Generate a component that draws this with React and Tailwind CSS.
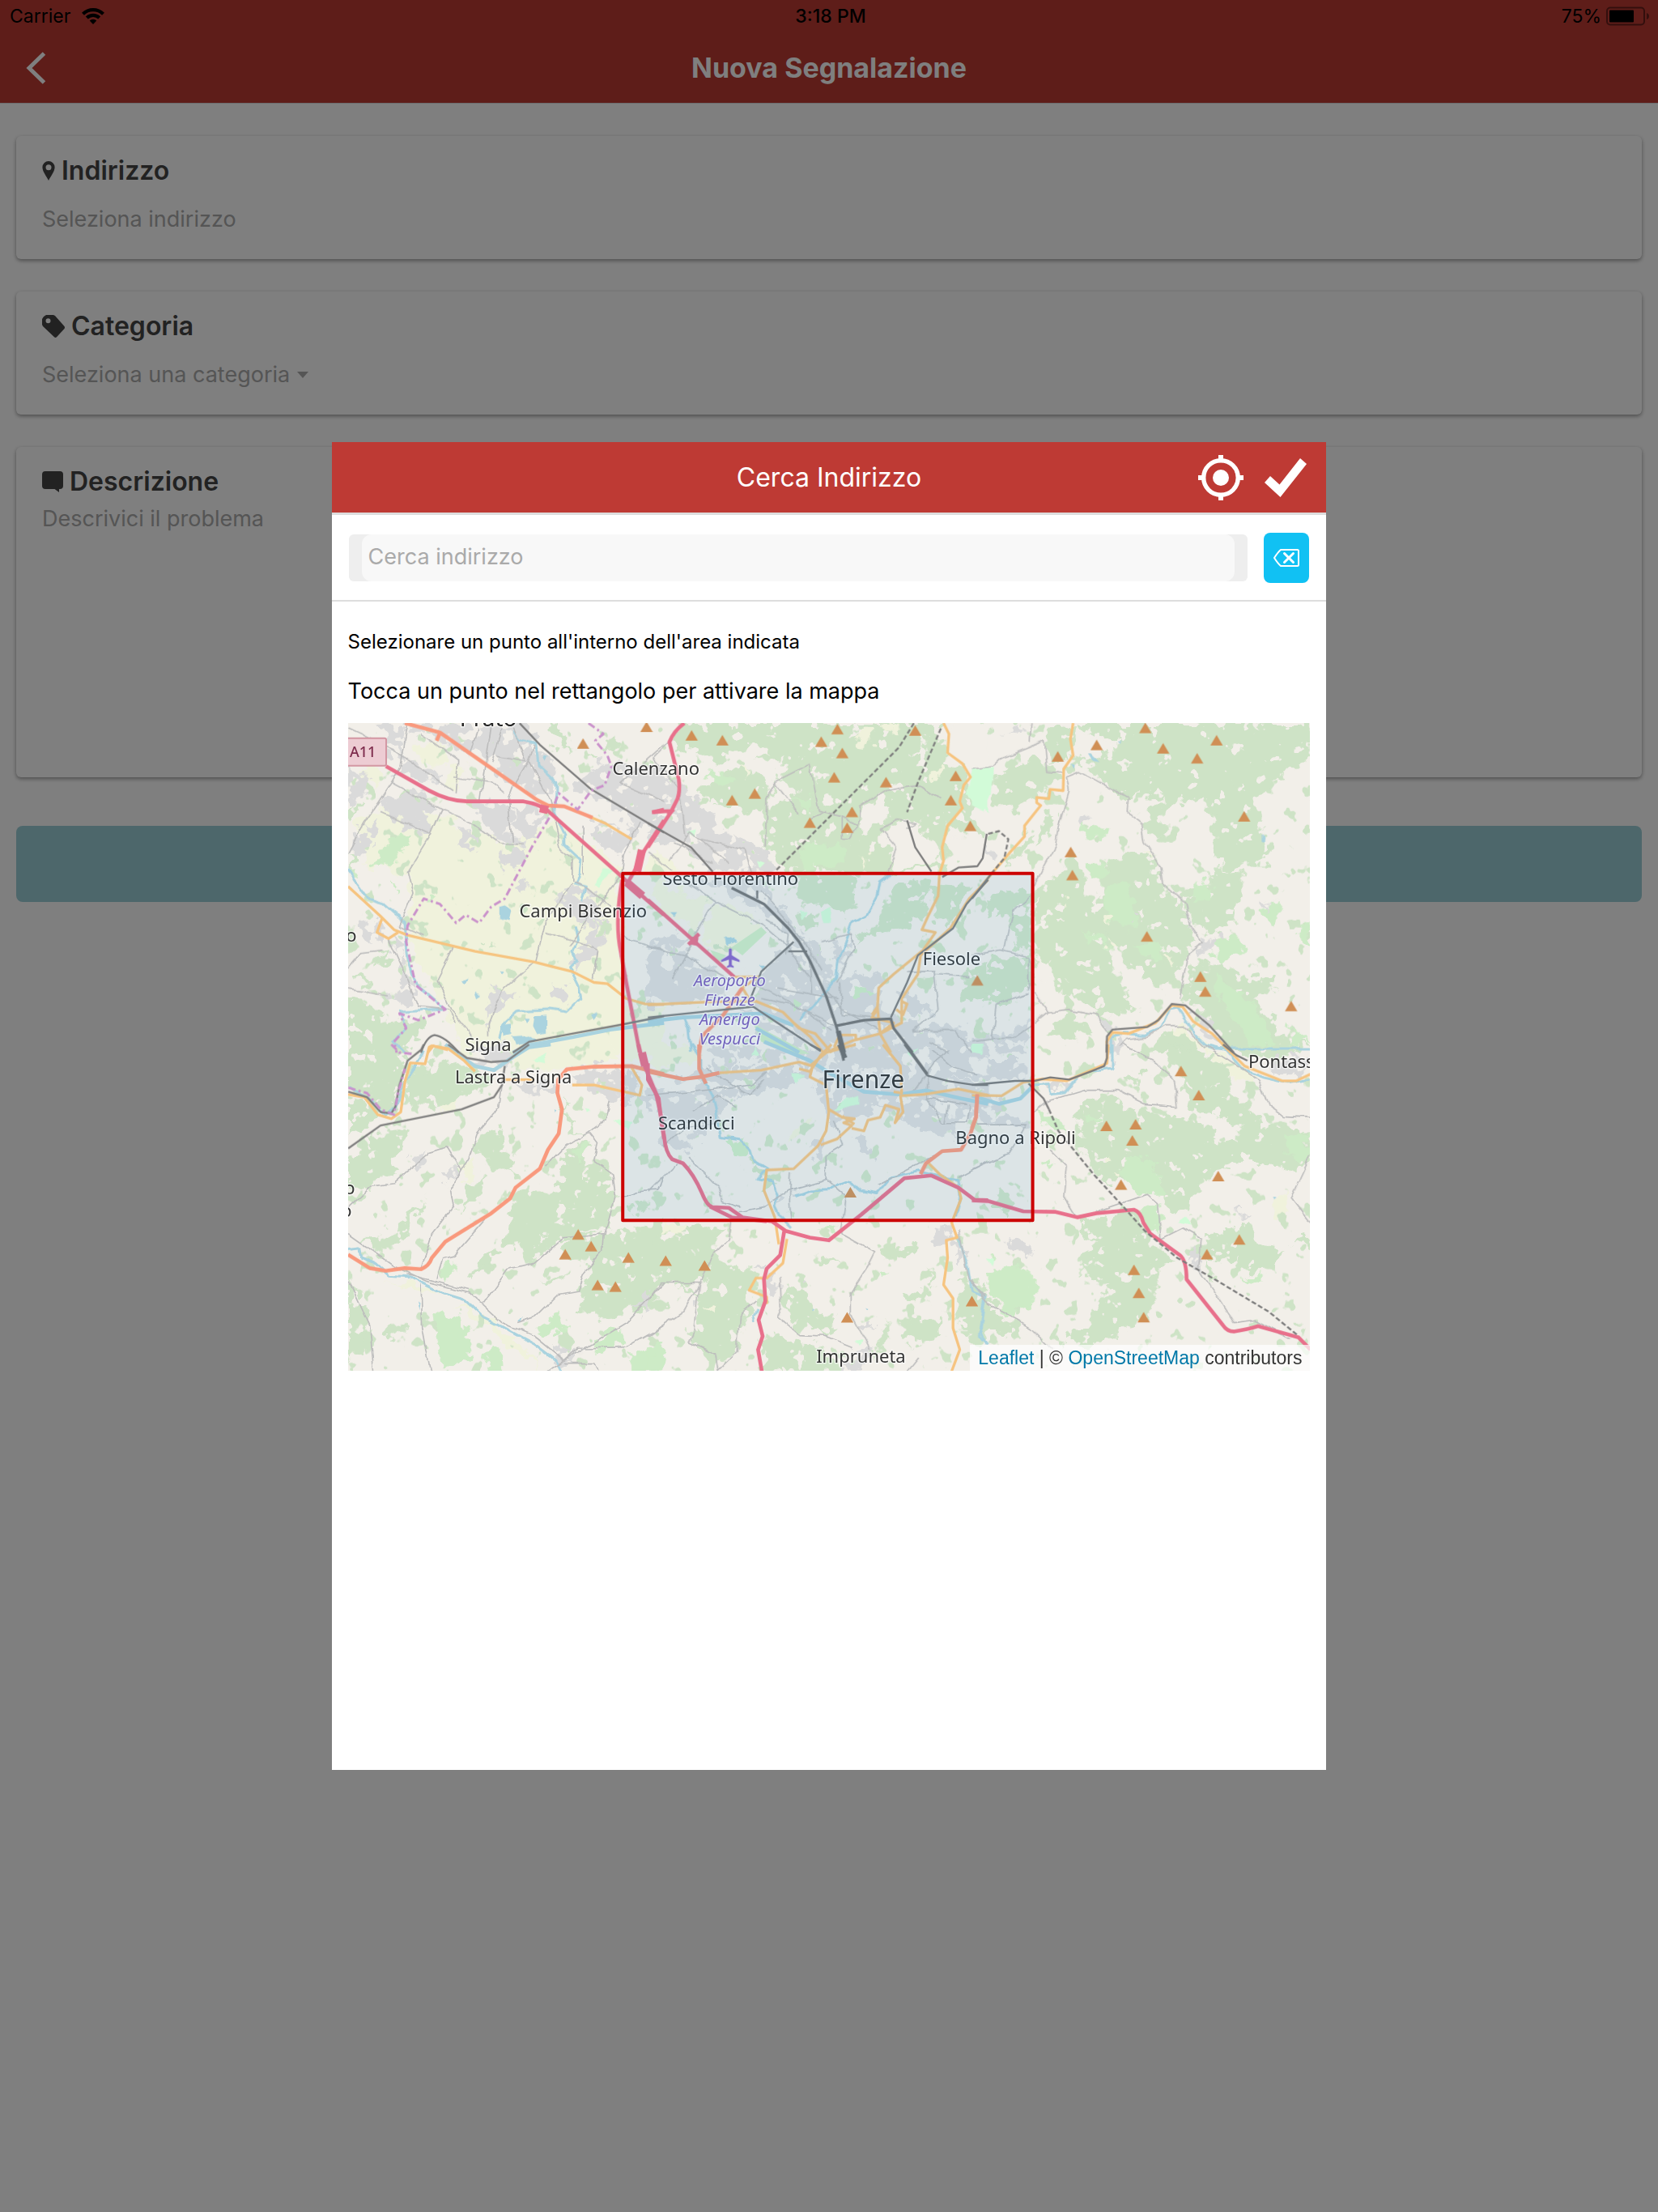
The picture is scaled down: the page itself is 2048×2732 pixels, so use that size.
import React from "react";

/* The map is drawn in six sheets; each sheet has its own origin and is drawn at a third of its size. */
const ORIGIN = {
  A: "translate(420 880) scale(0.33333)",
  B: "translate(800 880) scale(0.33333)",
  C: "translate(1200 880) scale(0.33333)",
  D: "translate(420 1290) scale(0.33333)",
  E: "translate(800 1290) scale(0.33333)",
  F: "translate(1200 1290) scale(0.33333)",
};

const FARM = {
  A: "M60 400L200 340 350 380 600 480 800 400 1030 560 1045 1100 1200 1080 1200 1260 460 1260 380 1060 260 900 260 600 90 560ZM290 110L380 110 400 180 340 210 290 180ZM70 220L140 190 150 280 80 250ZM400 190L460 200 440 260 400 300ZM600 230L640 180 660 210 620 260Z",
  B: "M0 510L60 530 120 590 0 590ZM10 650L240 680 180 810 90 750ZM210 760L420 790 300 900 210 860ZM0 610L60 620 90 690 40 700Z",
  C: "M450 830L520 850 560 880 500 870ZM720 1180L780 1160 900 1240 850 1250Z",
  D: "M620 40L1000 0 1040 60 840 90 660 100ZM420 960L520 980 720 1160 740 1200 560 1060ZM180 880L360 900 300 920ZM1045 0L1110 0 1120 60 1050 60ZM360 210L430 200 420 250 370 260ZM440 430L500 420 500 470 460 520Z",
  E: "M0 10L160 0 180 60 60 90 0 80ZM540 300L600 270 590 330 530 350Z",
  F: "M860 10L930 30 1050 110 1040 150 950 110ZM1130 560L1170 550 1160 630 1120 640Z",
};

const FOREST = {
  A: "M30 1050L120 1080 190 1150 300 1120 320 1180 240 1260 30 1260ZM750 40L820 45 830 100 860 130 830 140 790 90ZM30 530L60 570 40 590ZM30 970L110 990 120 1010 40 990ZM980 110L1030 90 1030 120 990 130ZM30 350L80 350 40 400ZM120 910L190 880 170 930ZM530 850L570 860 550 875ZM920 150L950 160 930 175Z",
  B: "M130 40L850 40 940 100 1100 150 1190 230 1180 320 1100 420 1090 590 500 590 440 500 430 320 500 230 520 170 390 180 430 120 330 130 260 180 120 130 90 90ZM200 290L330 190 430 240 440 350 380 370 350 350 220 340ZM1130 320L1200 330 1250 460 1150 440 1110 420ZM850 40L1080 40 1110 160 1000 160 900 90ZM560 600L790 600 780 690 720 740 650 720 560 700ZM760 850L870 760 930 640 1060 620 1000 770 900 810 800 830ZM1050 620L1200 640 1180 700 1120 800 1060 740ZM1180 960L1260 930 1260 1060 1180 1080 1160 1040ZM540 760L610 740 620 800 560 800Z",
  C: "M380 40L1254 40 1254 165 1045 320 1075 400 1060 480 1110 520 1100 560 1000 560 960 590 890 520 900 400 870 320 720 340 680 400 720 420 690 480 650 450 640 370 720 300 600 310 540 310 440 200 490 160 560 100 480 80 380 60ZM380 150L420 180 500 210 490 230 390 190ZM290 50L370 60 365 170 300 190 280 110ZM80 260L140 190 280 170 330 240 240 310 130 360 80 330ZM0 360L50 440 0 470ZM160 490L220 440 190 520 130 560ZM230 670L370 540 390 560 460 740 510 880 600 1110 520 1120 400 1080 310 1000 240 890ZM500 560L560 530 680 540 700 640 780 690 810 790 840 850 800 880 790 940 720 1020 640 980 560 920 540 880 480 800 460 740 480 640ZM780 670L880 620 910 580 1000 590 1000 660 960 780 880 820 820 780ZM800 960L930 930 1000 980 1110 970 1100 1040 1040 1060 1200 1260 960 1260 840 1100 780 1060ZM290 1170L370 1110 450 1180 340 1220ZM690 1260L660 1230 720 1180 800 1190 850 1260ZM80 680L220 650 220 880 160 860 140 760 60 740ZM80 900L210 910 200 1020 120 1080 40 1080 60 960ZM280 380L310 370 300 450 230 500Z",
  D: "M30 20L200 20 240 60 230 150 200 240 150 240 100 190 30 160ZM30 190L80 200 130 260 60 330 30 330ZM240 90L420 60 540 110 560 160 420 200 350 240 250 200ZM120 330L240 310 260 340 190 420 210 480 30 560 30 430ZM650 550L740 540 800 560 830 420 900 360 930 380 900 450 1000 480 1010 560 1000 680 900 700 800 740 720 800 610 730 620 640ZM850 720L980 700 1200 660 1200 900 1100 980 1000 1020 880 980 900 900 930 820 820 770ZM30 870L80 920 110 1040 90 1130 30 1170ZM160 1040L260 1030 220 1080 170 1080ZM440 630L470 520 540 480 510 560ZM480 360L580 310 620 400 660 480 600 460 540 420ZM80 720L200 690 320 570 270 650 220 740 130 780ZM490 860L550 740 600 750 540 830ZM830 200L860 280 890 340 850 320ZM740 870L850 840 800 880ZM1060 590L1150 580 1080 630Z",
  E: "M60 680L160 665 290 680 260 720 240 760 320 830 400 840 420 870 380 930 390 1000 330 1060 340 1130 270 1180 210 1140 150 1100 180 950 100 870 0 920 0 760ZM500 890L560 900 620 970 720 1060 640 1050 520 1020ZM430 1090L500 1080 640 1120 740 1210 430 1210ZM880 770L990 730 980 790 900 800ZM960 1020L1080 1010 1090 1080 1000 1120 930 1080ZM650 790L720 820 640 810ZM1150 880L1250 880 1250 1100 1150 1060ZM940 920L1040 900 1050 820 1060 930 960 960ZM350 430L410 470 440 540 480 530 400 420ZM860 1100L900 1020 880 1110 830 1180Z",
  F: "M720 20L880 30 980 150 960 180 1020 240 1080 300 1120 280 1250 320 1250 440 1170 480 1120 450 1020 430 950 450 840 500 830 570 770 640 720 610 700 500 580 500 500 520 390 380 400 220 520 190 580 250 770 270 860 310 970 360 1000 300 860 250 800 230 790 160ZM560 120L640 100 620 160ZM400 660L560 620 640 690 760 820 690 830 660 1010 560 1060 480 1110 330 1110 360 1070 430 1050 470 970 520 900 400 850 400 780 450 730ZM880 700L1030 660 1030 720 1160 770 1060 840 960 820 990 780 870 780ZM100 540L150 570 130 620 90 600ZM1190 730L1254 710 1254 760ZM860 790L910 870 880 880ZM960 0L1250 0 1120 60 1020 40ZM0 960L50 940 130 1010 190 1080 60 1060 40 1110 0 1110Z",
};

const MEADOW = {
  A: "M120 550L200 460 270 450 200 570 150 580ZM190 630L215 650 200 665ZM330 670L355 680 340 695ZM40 560L75 600 60 620Z",
  B: "M200 230L280 220 330 270 250 260ZM560 500L720 480 740 560 580 580ZM530 330L610 310 590 380ZM760 1010L840 1040 830 1090 760 1090ZM540 1060L570 1080 540 1110Z",
  C: "M430 560L520 560 480 640 440 620ZM480 660L560 640 620 740 600 800 500 780ZM600 860L720 860 700 930 640 900ZM820 620L900 640 880 700 820 700ZM900 980L1040 1080 1120 1220 1060 1250 900 1040ZM400 410L500 440 490 490 420 460ZM420 800L500 860 520 880 440 840ZM1050 730L1140 700 1120 790 1060 750ZM1210 800L1254 790 1254 880 1220 850ZM1180 1160L1250 1220 1180 1240ZM900 850L990 830 1020 870 930 930 890 900Z",
  D: "M370 830L410 790 440 840 390 880ZM350 990L450 1010 480 1090 490 1160 380 1200 370 1110ZM530 1210L560 1110 600 1130 610 1210ZM730 1070L800 1000 830 1060 760 1080ZM930 1090L1040 1060 1060 1110 950 1130ZM1060 1160L1200 1100 1200 1210 1080 1210ZM880 390L920 350 920 400 880 440Z",
  E: "M300 360L360 350 380 410 320 400ZM850 850L890 840 880 870ZM640 690L690 670 700 700ZM700 230L780 190 780 230 700 250ZM0 1130L30 1170 40 1210 0 1210Z",
  F: "M580 400L680 440 720 560 620 560 540 480ZM620 620L690 600 700 700 650 680ZM1000 870L1070 850 1060 890ZM60 850L150 810 240 870 230 960 130 1000 60 930ZM230 250L320 280 360 330 280 300ZM430 250L480 280 420 290ZM1160 340L1250 330 1230 420 1180 430ZM60 790L80 800 70 820ZM250 440L290 435 270 460Z",
};

const URBAN = {
  A: "M150 50L240 45 230 180 160 160 150 90ZM250 45L700 45 720 120 800 200 790 300 700 300 640 280 560 190 500 150 420 130 340 90 260 80ZM30 200L120 240 100 300 30 340ZM190 230L260 170 370 230 330 260 250 230ZM160 340L240 290 320 320 370 360 330 400 300 460 160 370ZM500 340L630 340 640 480 600 480 500 400ZM640 340L720 350 770 390 740 440 690 500 640 480ZM50 440L130 400 130 470 90 540 50 530ZM650 650L680 610 710 630 670 670ZM440 430L530 460 480 540ZM590 520L680 500 660 560 610 590ZM820 660L900 640 980 700 980 780 900 800 860 740 820 720ZM860 270L980 190 1120 200 1200 200 1200 480 1100 420 1000 350 900 300ZM940 400L1110 420 1090 500 1040 530 930 480ZM780 1010L840 1010 860 1060 800 1090ZM560 1010L650 1050 580 1120 540 1180ZM190 820L240 860 230 940 280 1020 250 1100 180 1060 230 1000ZM70 770L140 760 140 850 80 810ZM880 880L960 780 1000 830 940 900 860 960ZM1150 890L1200 850 1200 960 1160 940Z",
  B: "M0 220L120 260 140 310 210 310 200 360 340 470 450 520 460 590 240 590 120 480 0 470ZM130 610L420 620 560 800 640 880 700 1000 850 960 860 1120 960 1140 1180 1170 1180 1260 650 1260 400 1090 420 960 540 860 430 750 240 640ZM0 880L150 890 260 960 300 1060 0 1090ZM20 820L140 820 120 870 0 860ZM680 850L760 860 740 930 690 920ZM940 1040L1020 1060 1060 1110 960 1120ZM340 1090L420 1130 640 1250 400 1180Z",
  C: "M830 850L900 830 910 850 850 900ZM390 380L430 400 400 430ZM470 1120L530 1180 500 1190ZM510 1210L560 1200 545 1260 510 1260ZM800 1110L860 1120 940 1230 900 1230ZM50 490L80 520 60 590ZM120 70L190 60 180 90ZM0 1210L120 1200 220 1140 200 1260 0 1260ZM1070 700L1100 710 1080 750ZM600 740L625 755 610 765ZM790 720L810 750 800 800Z",
  D: "M480 20L620 0 620 90 500 70ZM620 130L820 140 810 190 680 180ZM880 80L1040 90 1040 210 960 200 860 130ZM370 480L430 450 440 480 390 520ZM260 430L330 390 290 460 240 480ZM790 1130L880 1120 860 1200 800 1180ZM1080 960L1150 920 1140 990ZM1045 100L1100 90 1110 180 1060 240 1045 230ZM1110 170L1200 180 1200 240 1130 230Z",
  E: "M0 180L200 90 560 90 600 20 900 0 1050 100 1260 150 1260 300 1180 260 1130 350 980 300 850 220 760 280 690 300 600 120 440 170 340 210 290 200 260 300 180 360 120 400 60 380 40 230ZM220 0L600 20 560 60 240 90ZM1040 0L1260 0 1260 130 1050 110ZM440 560L560 530 520 580ZM600 380L660 350 640 450ZM760 360L800 340 850 430 830 430ZM430 860L490 870 490 920 450 920ZM1050 690L1110 670 1120 740 1050 740ZM1120 720L1180 760 1160 810ZM780 1040L850 1040 800 1070ZM770 1120L820 1130 800 1210 710 1210 760 1170ZM390 820L440 815 410 840ZM560 880L590 890 570 910ZM160 950L190 940 180 990Z",
  F: "M120 720L230 750 210 790ZM280 130L360 140 340 180 290 160ZM0 20L60 60 200 60 200 130 0 130ZM20 210L100 200 210 300 120 310 20 300ZM820 740L840 760 850 860 810 820ZM1100 70L1200 30 1250 60 1220 110 1120 100ZM520 0L550 0 530 90ZM650 50L700 90 740 130 690 90ZM1000 610L1030 610 980 640Z",
};

const CLEARING = {
  B: "M340 130L430 120 450 160 370 180ZM500 240L550 290 540 315 490 320 450 370 440 330ZM790 350L830 340 880 300 890 380 830 430 780 460ZM860 430L940 390 1000 410 1050 480 1090 560 900 580 920 500 860 470ZM1110 480L1200 440 1260 480 1260 560 1130 550ZM970 160L1010 120 1010 150ZM1110 40L1260 40 1260 190 1200 220 1120 150Z",
  C: "M380 80L450 90 520 120 480 170 430 150 380 120ZM320 765L345 770 335 785ZM420 960L450 965 435 975ZM240 910L290 920 300 980 250 990ZM1030 42L1090 42 1050 60Z",
  D: "M920 610L950 620 930 640ZM740 710L775 710 750 730ZM720 770L745 770 740 790ZM900 460L920 475 910 490ZM1060 860L1085 850 1080 880Z",
  E: "M140 900L230 860 230 900 180 930ZM60 930L110 900 140 930 60 1000Z",
  F: "M460 410L510 400 520 440 480 450ZM590 720L615 725 605 735Z",
};

const GLADES = {
  B: "M780 60L830 60 830 125 775 120ZM870 42L920 50 910 85ZM1040 260L1085 180 1110 200 1060 260ZM345 190L385 220 370 240ZM790 540L810 545 800 575Z",
  C: "M340 680L365 690 350 710ZM640 520L660 525 650 535ZM485 740L520 750 500 790ZM720 900L740 905 730 930Z",
  E: "M70 660L140 665 130 700 60 700ZM210 960L260 970 230 1000Z",
  F: "M490 420L530 415 520 450 490 450ZM510 490L540 485 530 510Z",
};

/* Open ground among the built-up areas inside the selectable rectangle. */
const OPEN_GROUND = {
  B: "M20 660L230 685 190 770 130 790 60 730ZM250 715L300 705 425 790 330 890 240 850 215 790Z",
};

const AIRFIELD = {
  B: "M310 870L420 795 440 815 350 900ZM230 880L290 900 260 930ZM390 1150L440 1180 600 1265 540 1265 420 1220ZM540 1060L570 1080 540 1110Z",
};

const SUBURB_GAPS = {
  B: "M250 700L320 720 300 760 240 740ZM480 700L560 780 600 860 560 830ZM300 940L380 960 360 1000 300 980ZM620 980L650 1000 640 1030ZM900 1180L960 1200 930 1240ZM1040 1180L1080 1200 1060 1230Z",
  E: "M300 20L420 60 340 80ZM60 140L200 130 180 180 70 170ZM1190 40L1260 60 1260 110 1200 100ZM1060 200L1160 240 1130 270 1060 250ZM300 150L360 140 330 180ZM110 290L200 300 150 350Z",
};

const LEISURE = {
  A: "M940 640L980 580 1010 585 960 650Z",
  B: "M1180 300L1200 220 1260 200 1260 370 1210 340ZM640 740L680 720 670 780 650 780ZM150 440L180 430 180 460ZM410 550L440 560 420 580ZM560 740L590 740 570 770Z",
  C: "M0 210L80 205 70 300 40 370 0 350Z",
  D: "M1010 280L1080 290 1070 320ZM720 60L760 30 765 70ZM905 235L930 240 915 250Z",
  E: "M690 245L720 210 780 190 780 225ZM530 110L580 110 550 145ZM380 30L400 10 410 40ZM960 30L1000 10 980 40ZM765 1095L795 1095 790 1120Z",
  F: "M0 0L40 0 40 40 0 30ZM760 660L790 640 810 670ZM55 795L80 800 70 820Z",
};

const PONDS = {
  A: "M590 720L610 715 635 730 625 775 590 765ZM720 1125L765 1120 765 1190 730 1195 715 1165ZM600 1155L640 1150 640 1190 605 1200ZM640 1200L700 1195 730 1215 650 1230ZM750 165L770 160 760 185ZM500 1030L525 1050 510 1060ZM450 990L470 980 460 1005ZM930 1120L955 1110 940 1140ZM590 960L610 960 600 970ZM680 1135L700 1135 690 1155Z",
  B: "M285 825L330 850 290 865ZM80 740L105 740 95 755ZM415 935L435 935 425 950Z",
  C: "M1073 455L1088 460 1085 482 1073 480ZM430 155L440 155 470 185 445 180ZM365 190L378 195 375 212ZM540 110L555 112 548 120Z",
  D: "M800 240L808 245 802 255ZM285 945L295 955 292 985ZM660 1020L680 1010 670 1030Z",
  E: "M610 975L620 978 612 988ZM810 970L820 975 815 980Z",
  F: "M1115 562L1128 564 1120 574Z",
};

const RIVERS = {
  A: "M640 70L660 100 725 115 735 200 800 260 800 300 790 370 830 450 830 490 890 545 885 600 870 630 910 640 895 700M30 580L70 640 110 695 160 710 240 780 250 900 285 1010 390 1100 220 1110 245 1160 200 1220 240 1260M870 790L880 840 860 880 880 920 850 950 880 1010 890 1060 840 1110 780 1100 660 1105 600 1160 590 1210",
  B: "M900 600L860 630 850 680 810 750 755 780 730 850 710 910 700 980 660 1030 620 1080 560 1140M130 1130L150 1170 160 1260",
  C: "M1260 1245L880 1245 830 1200 790 1140 760 1095 730 1100 700 1170 640 1195 560 1190 515 1200 515 1260",
  D: "M310 20L280 70 240 130 210 230 170 260 110 200 30 160M30 760L75 755 80 790 130 810 180 855 260 860 320 890 380 920 460 945 530 1010 600 1045 720 1110 800 1170 820 1210",
  E: "M160 0L200 60 200 120 240 190 255 260 270 340 340 350 380 390 390 430 440 460 410 500 460 510 480 560 470 600 490 640 530 680M545 560L600 540 680 535 710 520 750 505 790 540 850 550 900 490 950 480 1000 470 1080 490 1150 500 1160 560 1140 640M1150 720L1180 800 1200 910 1250 930 1230 1050 1255 1110M410 980L390 1030",
  F: "M230 150L280 145 290 185 340 180 390 120 450 100 520 90 520 0M860 0L940 20 1000 90 1080 120 1170 140 1254 125M0 880L45 930 30 1080 60 1110",
};

const ARNO = {
  A: "M640 1260L700 1232 860 1203 1000 1175 1200 1150",
  B: "M0 1145L130 1130 430 1115 540 1160M400 1170L560 1260",
  D: "M390 0L440 40 500 80 570 95 620 60 700 10 780 0",
  E: "M430 -10L600 60 680 110 800 175 930 185 1030 170 1160 200 1260 220",
  F: "M0 190L100 220 180 200 230 150",
};

const LANES = {
  A: "M250 50L225 200 190 260 90 410 30 520M190 260L375 360 490 410 590 485 680 490M640 280L625 320 640 480M375 360L330 460 250 590 270 670 220 790 310 830M700 180L640 280M720 120L700 180 780 330 820 510 860 540 860 620 900 640 1000 720M420 870L360 990 410 1100 490 1200M860 630L760 780 725 920 600 1030 550 1150 550 1200M30 60L180 130 420 290M760 815L880 850 955 885 940 990M1045 820L1080 850 1200 880M30 950L80 890 160 880M180 840L240 970 290 1090 400 1100 430 1150M150 370L330 450M560 50L520 330M600 60L560 190M1200 120L1040 260 1200 330M1110 400L1050 530 1040 600M300 80L440 180 430 300M510 60L480 160M420 240L560 260 610 300M640 60L690 180 580 160M900 420L900 600M30 1025L180 1050M850 860L1045 600",
  B: "M435 500L440 320 470 260 600 195 630 370 720 390M90 100L20 170 120 290 140 460M200 470L360 510 385 590M860 430L930 400 1000 410 960 430M860 430L920 500 890 590M0 870L130 900 300 990M250 700L180 820 90 990M130 620L250 700 430 790 500 850 600 980M660 1030L720 1100 860 1180M700 1000L760 880 750 820 640 850M960 960L1060 960 1075 1100 980 1180M720 470L720 390 780 420 790 350 880 290 940 280 1010 270 1080 320M720 470L750 470 780 420M1190 980L1060 970M480 1020L700 1060M400 1010L690 1160M1200 1260L1140 1180 980 1180M80 550L160 440 300 560M470 260L560 380M420 660L560 820 640 960M600 400L660 370M440 770L520 820 510 900M100 480L240 560M0 520L90 590M420 1060L560 1090 680 1180M600 900L610 1040M710 1000L720 1120 840 1130M1040 1220L1120 1260",
  C: "M0 210L80 200 110 170 270 105 280 220 340 225M220 40L215 110M350 240L400 220 580 320 575 370 630 415 640 480 700 570 710 640 790 710 810 790 850 850 800 890 770 1060M350 240L360 290 320 430 310 490 260 580 230 640M230 1040L280 1110 360 1100 460 1120 510 1190M0 900L110 880 210 910 210 1030M120 880L150 740 220 680M210 1040L90 1080 75 1210 0 1220M230 1150L280 1110M550 1240L570 1210 650 1200 720 1160 780 1160 860 1240M75 1210L150 1210 220 1160",
  D: "M30 610L120 525 200 515 330 400 395 380 450 470M600 150L590 230 510 330 480 420 410 540 420 600 340 700 300 830M550 630L420 780 380 790 360 870M30 700L200 820 330 880 480 920 600 1030 720 1080 830 1170 770 1210M250 850L480 910M300 890L305 1050 335 1210M30 870L110 1040 125 1210M530 960L620 835 720 810 830 715 980 700 1020 560 1010 480 940 430 955 370 920 325 820 390 760 450M1000 210L980 280 920 325M975 700L970 770 900 850 880 915 800 930 720 1010 660 1030M830 1170L1060 1030 1200 880M830 1170L880 1125 1060 1120 1200 1040M830 1180L940 1180 960 1210M1045 570L1090 545 1180 540 1200 490",
  E: "M0 1080L130 990 200 870 215 830 250 770 300 720 310 660M0 950L50 880 190 880 170 1060 150 1100 250 1145 260 1210 330 1140 340 1000 400 950M0 190L120 180 390 150 440 100M490 860L495 970 480 1010 560 1075 660 1080 760 1120M735 560L715 700 840 770 815 820 750 920 750 1000 800 1090 820 1130M530 470L525 580 530 650M725 370L660 410 660 500 520 540 430 600 340 620M150 420L260 530 280 580 340 600M1150 690L1190 870 1250 930M0 550L60 490 110 440M1035 110L1030 200 1090 290 1180 290 1190 220M1030 200L1180 220M1110 220L1100 290M1260 430L1150 490M850 520L1060 410M690 280L725 370M980 180L1060 70 1120 20M170 250L260 190 330 230M220 90L380 190 430 130M60 380L140 310 260 290M660 500L730 560M1050 20L1120 80 1220 110M960 1210L1000 1160",
  F: "M0 460L140 400 200 300 20 300M230 250L280 210 410 170 540 170 640 220 760 230 750 130 670 60 560 0M390 640L340 560 350 450 290 390M460 620L650 555 690 590 700 720 780 680 850 720 840 830 900 920 970 1030 1050 1020 1180 1090M0 870L60 960 220 1050 300 1130M1254 410L1180 570 1250 660M860 0L1060 130 1100 230 1150 265 1250 270",
};

const BORDERS = {
  A: "M920 40L975 80 945 105 990 160 1005 200 980 270 930 290 880 360 810 300 790 350M775 390L710 500 610 690 560 720 515 780 465 750 430 780 370 710 310 690 250 790 245 850 280 1010 390 1100 290 1140 220 1115 245 1170 200 1220 210 1260",
  D: "M190 0L220 30 265 35M30 160L100 180 150 240 200 260 215 180 240 90",
};

const PRIMARY = {
  A: "M920 385L980 410 1080 470M30 645L150 755 200 805 250 825 500 885 720 925 860 960 940 1000 990 1005 1060 1060 1130 1080 1200 1082M155 765L137 815 180 838 215 815M325 1260L345 1235 400 1250",
  B: "M1095 40L1115 80 1110 150 1165 190 1195 240 1170 270 1155 330 1165 355 1110 420 1090 500 1095 550 1080 600 1075 680 1040 750 1015 805 1065 815 1020 880 910 970 855 1020 850 1100 830 1130 910 1150 860 1190 760 1215 680 1250M1260 620L1190 690 1120 800 1010 900 1000 970 940 1060 940 1150 860 1190 900 1260M0 1083L230 1072 400 1070 500 1110 560 1170 620 1190 680 1260M540 1150L600 1200 650 1260M320 980L410 980 350 1020 380 1070M690 1240L710 1195 770 1195 770 1215M830 1120L850 1090 860 1190M940 1070L960 1080 945 1120 920 1100",
  C: "M375 40L365 100 375 160 340 210 338 290 290 285 285 320 240 315 240 335 255 345 195 420 195 460 140 520 80 590 0 685M960 1260L890 1190 820 1145 780 1090 740 1085 680 1150 580 1190 520 1185 500 1220 505 1260",
  D: "M30 185L90 195 140 260 190 275 225 250 240 140 260 68 315 72 330 10 340 5 400 15 460 60 500 100M600 130L720 130M860 150L940 150 1110 188 1118 150 1080 85",
  E: "M265 105L420 95 560 65 610 80 600 120 660 150 670 250 660 320 630 375 540 460 440 465 430 540 470 640 485 740M560 90L600 100 640 40 680 0M600 80L660 30 770 0M670 240L720 270 765 275 725 290 755 300 700 350 640 372M720 265L765 295M755 310L800 320 815 280 860 270 880 225 930 240 915 290 945 250 935 190 1020 185 1150 165 1260 188M870 0L935 80 940 180 910 175M1040 440L1080 480 1150 530 1160 570 1125 660 1145 715 1105 725 1110 790 1095 890 1130 940 1130 1050 1155 1130 1125 1210M515 720L500 810 440 865 400 865 375 910 440 935 440 960",
  F: "M0 188L110 190 190 140 260 128 350 135 500 70 505 0M930 0L1010 80 1150 135 1200 135 1254 110",
};

const TRUNK = {
  A: "M240 40L370 75 730 325 770 345 830 348 935 390M370 75L358 105",
  B: "M350 1020L280 1120 200 1200 190 1260",
  D: "M30 778L110 828 170 838 240 828 300 832Q330 820 340 790L390 730 560 625 630 570 650 530 740 460 770 390 810 330 822 240 805 180 808 130 840 92 940 82 1080 80 1200 110",
  E: "M0 100L130 128 200 120 265 105M190 0L190 90 215 145M1220 185L1215 270 1195 330 1160 390 1090 395 1030 440 1010 480",
  F: "M20 185L15 270 0 310",
};

const MOTORWAY = {
  A: "M170 200L330 290Q400 328 470 330L680 330Q740 340 770 365L1045 610 1130 690 1200 750M1200 400L1115 530 1095 580 1060 640M1045 620Q1020 760 1035 860L1060 1000 1110 1260M1160 370L1200 360",
  B: "M135 40Q95 70 80 110L115 250Q120 290 110 320L85 370 0 500M15 370L85 365M0 695L320 980M150 860L190 820",
  D: "M1105 0L1120 60 1170 180 1190 270 1200 350",
  E: "M0 70L0 130 40 200 50 290 60 340Q65 400 90 425L130 440Q170 480 200 550 220 600 240 602L300 605 350 640 460 655 510 690 600 715 670 725 790 630 950 495 1050 485 1150 530 1210 575 1260 577M230 600L310 640 440 655M505 690L490 780 440 830 430 870 435 950 410 1020 425 1080 408 1130 422 1210",
  F: "M0 577L60 580 190 618 310 620 390 640 460 625 600 612Q625 620 635 660L660 700 770 780Q795 800 795 870L930 1040Q945 1063 970 1063 1020 1055 1060 1043L1210 1085 1254 1130",
};

const JUNCTIONS = {
  A: "M740 355L770 362M1118 510L1100 590M1062 630L1120 680",
  B: "M80 365L90 375M160 845L185 850",
  D: "M1118 30L1130 80",
};

const RAIL = {
  A: "M665 40L740 120 930 285 1200 445M300 1260Q320 1200 350 1195 390 1200 440 1260M640 1260L700 1220 860 1190 1050 1155 1200 1125",
  B: "M0 410L160 500 240 590M540 850L420 960 380 1060M520 885L590 885M0 1130L390 1090 480 1150 640 1255M900 1130L960 1000 1000 900 1130 800 1180 710 1260 620M960 400L990 500 1050 590M1255 450L1240 540 1220 570 1150 575 1090 610M405 660L405 690",
  C: "M0 690L70 600M970 1260L880 1160 790 1085 740 1080 690 1140 650 1165 520 1175 500 1200 498 1260",
  D: "M30 175L100 195 150 250 190 255 205 230 220 150 250 60 300 20 310 0M400 0L470 50 560 65 620 60 700 0M30 385L150 300 450 240 570 195 600 150 610 80",
  E: "M950 0L1035 115 1110 135 1210 150 1260 150M600 0L640 20",
  F: "M0 150L160 135 230 135 290 122 360 130 440 100 490 80 500 50 500 0M210 145L265 200 285 240M930 0L980 40 1020 60",
};

const MAIN_RAIL = {
  B: "M310 650L430 710 520 800 560 850 600 920 660 1050 700 1170 725 1290M700 1160L800 1140 900 1135 910 1170 980 1260",
  E: "M955 0L1035 110",
};

const STATION = {
  B: "M705 1180L725 1260",
  E: "M710 0L730 50",
};

const TUNNELS = {
  B: "M985 40L930 130 470 590M1085 60L1000 260 960 370",
  C: "M60 450L100 440 135 470 120 540 70 600",
  F: "M285 240L320 320 450 480 560 600 640 690 760 790 900 870 1100 990 1210 1080",
};

const PEAKS = {
  A: [[900, 115], [1135, 53]],
  B: [[162, 85], [276, 103], [702, 62], [642, 108], [720, 150], [990, 67], [690, 240], [882, 258], [1140, 235], [1122, 325], [312, 325], [396, 300], [756, 368], [600, 408], [738, 427], [1194, 420], [1220, 992]],
  C: [[642, 57], [462, 120], [318, 163], [708, 133], [906, 103], [834, 170], [1008, 385], [366, 517], [372, 602], [648, 829], [846, 978], [864, 1033], [1182, 1087]],
  D: [[882, 703], [930, 746], [834, 776], [1068, 788], [954, 890], [1020, 896]],
  E: [[66, 800], [210, 818], [750, 547], [738, 1010], [1200, 950]],
  F: [[774, 98], [840, 187], [498, 301], [606, 295], [594, 355], [552, 518], [912, 487], [990, 721], [870, 776], [600, 834], [618, 919], [636, 1009]],
};

const TOWNS = [
  ["Calenzano", 810, 957], ["Campi Bisenzio", 720, 1133], ["Sesto Fiorentino", 902, 1093],
  ["Signa", 603, 1298], ["Lastra a Signa", 634, 1338], ["Scandicci", 860, 1395],
  ["Bagno a Ripoli", 1254, 1413], ["Fiesole", 1175, 1192], ["Impruneta", 1063, 1683],
  ["Pontass", 1582, 1319], ["o", 434, 1163], ["o", 432, 1475], ["o", 428, 1503],
];

const AIRPORT = [["Aeroporto", 1218], ["Firenze", 1242], ["Amerigo", 1266], ["Vespucci", 1290]];

const AREA = { filterUnits: "userSpaceOnUse", x: "400", y: "860", width: "1250", height: "860" };

function Layer({ data, ...props }) {
  return (
    <g {...props}>
      {Object.entries(data).map(([sheet, d]) => (
        <path key={sheet} d={d} transform={ORIGIN[sheet]} />
      ))}
    </g>
  );
}

function Lines({ data, color, width, dash }) {
  return (
    <Layer data={data} fill="none" stroke={color} strokeWidth={width} strokeLinejoin="round" strokeDasharray={dash} />
  );
}

/* Ragged outlines with small irregular holes, as land cover has. */
function CoverFilter({ id, seed, cut }) {
  return (
    <filter id={id} {...AREA}>
      <feTurbulence type="fractalNoise" baseFrequency="0.06" numOctaves="3" seed={seed} result="n" />
      <feDisplacementMap in="SourceGraphic" in2="n" scale="30" xChannelSelector="R" yChannelSelector="G" result="shape" />
      <feColorMatrix in="n" type="matrix" values={"0 0 0 0 0  0 0 0 0 0  0 0 0 0 0  0 0 30 0 " + cut} result="holes" />
      <feComposite in="shape" in2="holes" operator="out" />
    </filter>
  );
}

function MapDrawing() {
  return (
    <svg viewBox="430 893 1188 800" preserveAspectRatio="xMidYMid slice" className="block h-full w-full" role="img" aria-label="Mappa di Firenze">
      <defs>
        <CoverFilter id="woods" seed="4" cut="-20.1" />
        <CoverFilter id="built" seed="12" cut="-18.3" />
        <filter id="ragged" {...AREA}>
          <feTurbulence type="fractalNoise" baseFrequency="0.06" numOctaves="3" seed="4" result="n" />
          <feDisplacementMap in="SourceGraphic" in2="n" scale="26" xChannelSelector="R" yChannelSelector="G" />
        </filter>
        <filter id="scrub" {...AREA}>
          <feTurbulence type="fractalNoise" baseFrequency="0.045" numOctaves="3" seed="21" result="n" />
          <feColorMatrix in="n" type="matrix" values="0 0 0 0 0  0 0 0 0 0  0 0 0 0 0  30 0 0 0 -19.8" result="spots" />
          <feComposite in="SourceGraphic" in2="spots" operator="in" />
        </filter>
        <filter id="wobble" {...AREA}>
          <feTurbulence type="fractalNoise" baseFrequency="0.05" numOctaves="2" seed="9" result="n" />
          <feDisplacementMap in="SourceGraphic" in2="n" scale="8" xChannelSelector="R" yChannelSelector="G" />
        </filter>
      </defs>
      <rect x="400" y="860" width="1260" height="860" fill="#f2efe9" />
      <Layer data={FARM} fill="#f0f2dc" filter="url(#ragged)" />
      <rect x="400" y="860" width="1260" height="860" fill="#cee3c6" filter="url(#scrub)" />
      <Layer data={FOREST} fill="#cee3c6" filter="url(#woods)" />
      <g filter="url(#ragged)">
        <Layer data={MEADOW} fill="#cdebc6" />
        <Layer data={CLEARING} fill="#f2efe9" />
        <Layer data={GLADES} fill="#f0f2dc" />
      </g>
      <Layer data={URBAN} fill="#dadada" filter="url(#built)" />
      <g filter="url(#ragged)">
        <Layer data={SUBURB_GAPS} fill="#f2efe9" />
        <Layer data={OPEN_GROUND} fill="#f0f2dc" />
      </g>
      <Layer data={AIRFIELD} fill="#cdebc6" />
      <Layer data={LEISURE} fill="#d2fbd8" filter="url(#wobble)" />
      <g filter="url(#wobble)">
        <Layer data={PONDS} fill="#aad3df" />
        <Lines data={RIVERS} color="#aad3df" width="9" />
        <Lines data={LANES} color="#bdbdbd" width="5" />
      </g>
      <Lines data={ARNO} color="#aad3df" width="14" />
      <Lines data={PRIMARY} color="#f6c480" width="10" />
      <Lines data={TRUNK} color="#f9997d" width="14" />
      <Lines data={MOTORWAY} color="#e8708b" width="14" />
      <Lines data={JUNCTIONS} color="#e8708b" width="30" />
      <Lines data={RAIL} color="#7d7d7d" width="7" />
      <Lines data={MAIN_RAIL} color="#757575" width="10" />
      <Lines data={STATION} color="#6f6f6f" width="18" />
      <Lines data={TUNNELS} color="#7d7d7d" width="7" dash="18 9" />
      <Lines data={BORDERS} color="#ca92cb" width="9" dash="28 12 8 12" />
      {Object.entries(PEAKS).map(([sheet, points]) => (
        <path
          key={sheet}
          transform={ORIGIN[sheet]}
          fill="#d08f55"
          d={points.map(([x, y]) => `M${x - 23} ${y + 20}l23 -39l23 39z`).join("")}
        />
      ))}
      <path d="M21 16v-2l-8-5V3.5c0-.83-.67-1.5-1.5-1.5S10 2.67 10 3.5V9l-8 5v2l8-2.5V19l-2 1.5V22l3.5-1 3.5 1v-1.5L13 19v-5.5l8 2.5z" transform="translate(888 1169) scale(1.2)" fill="#8866cc" />
      <g fontFamily="'Noto Sans', sans-serif" fontSize="22" textAnchor="middle" fill="#333333" stroke="#ffffff" strokeOpacity="0.6" strokeWidth="3" strokeLinejoin="round" paintOrder="stroke">
        {TOWNS.map(([name, x, y]) => (
          <text key={name + y} x={x} y={y}>{name}</text>
        ))}
        <text x="1066" y="1344" fontSize="30">Firenze</text>
        <text x="603" y="897" fontSize="28" fill="#222222">Prato</text>
        <g fontSize="20" fontStyle="italic" fill="#7a5cba">
          {AIRPORT.map(([name, y]) => (
            <text key={name} x="901" y={y}>{name}</text>
          ))}
        </g>
      </g>
      <rect x="420" y="912" width="57" height="34" rx="2" fill="#edccd3" stroke="#d397a3" strokeWidth="2" />
      <text x="432" y="935" fontFamily="'Noto Sans', sans-serif" fontSize="18" fontWeight="500" fill="#7d2b4c">A11</text>
      <rect x="769" y="1079" width="506" height="428" fill="#2a90d0" fillOpacity="0.11" stroke="#cc0000" strokeWidth="4" strokeLinejoin="round" />
    </svg>
  );
}

function Card({ children, className }) {
  return (
    <section className={"rounded-md bg-white px-8 shadow-[0_2px_5px_rgba(0,0,0,0.4)] " + className}>
      {children}
    </section>
  );
}

const labelClass = "flex items-center gap-2 text-[32px] leading-9 font-semibold text-[#444]";
const fieldClass = "text-[27px] leading-9 text-[#aaa] placeholder:text-[#aaa] outline-none";

export default function App() {
  return (
    <div className="relative min-h-screen bg-white font-['Inter',sans-serif]">
      <header className="h-32 border-b border-[#ddd] bg-[#bc3a32]">
        <div className="grid h-10 grid-cols-3 items-center pr-2 pl-3 text-[23px] text-black">
          <div className="flex items-center gap-3.5">
            <span>Carrier</span>
            <svg viewBox="0 0 28 20" className="h-5 w-7" aria-hidden="true">
              <path d="M1.5 7.2a18 18 0 0 1 25 0M6.3 12a11 11 0 0 1 15.4 0" fill="none" stroke="black" strokeWidth="4.2" />
              <path d="M14 20l-4.3-4.6a6.2 6.2 0 0 1 8.6 0z" />
            </svg>
          </div>
          <span className="text-center font-medium">3:18 PM</span>
          <div className="flex items-center justify-end gap-1.5">
            <span>75%</span>
            <svg viewBox="0 0 56 24" className="h-6 w-14" aria-hidden="true">
              <rect x="1" y="1.5" width="46" height="21" rx="4" fill="none" stroke="black" strokeOpacity="0.45" strokeWidth="2" />
              <rect x="4" y="4.5" width="30" height="15" rx="1" />
              <path d="M50 8q3 1 3 4t-3 4z" fillOpacity="0.45" />
            </svg>
          </div>
        </div>
        <div className="grid h-[88px] grid-cols-[1fr_auto_1fr] items-center">
          <button type="button" aria-label="Indietro" className="ml-8 w-7">
            <svg viewBox="0 0 28 42" className="h-[42px] w-7" aria-hidden="true">
              <path d="M22.5 3L4 21l18.500 18" fill="none" stroke="white" strokeWidth="5" />
            </svg>
          </button>
          <h1 className="text-[34px] leading-10 font-bold text-white">Nuova Segnalazione</h1>
        </div>
      </header>

      <main className="flex flex-col gap-10 px-5 pt-10">
        <Card className="h-[152px] pt-[25px]">
          <label htmlFor="indirizzo" className={labelClass}>
            <svg viewBox="0 0 16 24" className="h-6 w-4" fill="#444" aria-hidden="true">
              <path fillRule="evenodd" d="M8 0a7.600 7.600 0 0 1 7.600 7.600C15.600 13 10.500 19 8 24 5.500 19 .4 13 .4 7.600A7.600 7.600 0 0 1 8 0zm0 4.200a3.500 3.500 0 1 0 0 7 3.500 3.500 0 0 0 0-7z" />
            </svg>
            Indirizzo
          </label>
          <input id="indirizzo" placeholder="Seleziona indirizzo" className={fieldClass + " mt-6 block w-full"} />
        </Card>
        <Card className="h-[152px] pt-[25px]">
          <label htmlFor="categoria" className={labelClass}>
            <svg viewBox="0 0 28 28" className="h-7 w-7" fill="#444" aria-hidden="true">
              <path fillRule="evenodd" d="M5 0h9l2 1 11.500 13q1 1.500 0 3L18 27.300q-1.500 1.200-3 0L1 14 0 12V5l2-3zM7.500 4.200a3 3 0 1 0 0 6 3 3 0 0 0 0-6z" />
            </svg>
            Categoria
          </label>
          <div className="mt-6 flex items-center gap-2">
            <select id="categoria" className={fieldClass + " appearance-none bg-transparent"}>
              <option>Seleziona una categoria</option>
            </select>
            <svg viewBox="0 0 14 8" className="h-2 w-3.5" fill="#aaa" aria-hidden="true">
              <path d="M0 0h14l-7 8z" />
            </svg>
          </div>
        </Card>
        <Card className="h-[408px] pt-[25px]">
          <label htmlFor="descrizione" className={labelClass}>
            <svg viewBox="0 0 26 26" className="h-[26px] w-[26px]" fill="#444" aria-hidden="true">
              <path d="M4 0h18q4 0 4 4v14q0 4-4 4h-1v4l-5.500-4H4q-4 0-4-4V4q0-4 4-4z" />
            </svg>
            Descrizione
          </label>
          <textarea id="descrizione" placeholder="Descrivici il problema" className={fieldClass + " mt-2.5 block h-[300px] w-full resize-none"} />
        </Card>
        <button type="button" aria-label="Invia segnalazione" className="mt-5 h-[94px] rounded-lg bg-[#9aced6]" />
      </main>

      <div className="fixed inset-0 flex items-center justify-center bg-black/50">
        <div role="dialog" aria-modal="true" aria-labelledby="cerca-titolo" className="flex h-3/5 w-3/5 flex-col overflow-hidden bg-white">
          <div className="grid h-[90px] shrink-0 grid-cols-[1fr_auto_1fr] items-center border-b-3 border-[#ddd] bg-[#be3a34] px-6">
            <h2 id="cerca-titolo" className="col-start-2 text-[32px] leading-10 font-normal text-white">Cerca Indirizzo</h2>
            <div className="flex items-center justify-end gap-[26px]">
              <button type="button" aria-label="Posizione attuale">
                <svg viewBox="0 0 56 56" className="block size-14" fill="white" aria-hidden="true">
                  <circle cx="28" cy="28" r="21.300" fill="none" stroke="white" strokeWidth="5.400" />
                  <circle cx="28" cy="28" r="10" />
                  <path d="M25 0h6v6h-6zM25 50h6v6h-6zM0 25h6v6H0zM50 25h6v6h-6z" />
                </svg>
              </button>
              <button type="button" aria-label="Conferma">
                <svg viewBox="0 0 52 50" className="block h-[50px] w-[52px]" fill="white" aria-hidden="true">
                  <path d="M0 31l7-8 11.500 10.500L44 1l8 7-32.500 41z" />
                </svg>
              </button>
            </div>
          </div>
          <div className="flex shrink-0 items-center gap-5 border-b-2 border-[#ddd] px-[21px] pt-[22px] pb-[21px]">
            <div className="min-w-0 flex-1 rounded-md bg-[#eee] px-4">
              <input type="text" aria-label="Cerca indirizzo" placeholder="Cerca indirizzo" className="block h-[58px] w-full rounded-xl bg-[#f8f8f8] px-2 pb-1 text-[27px] outline-none placeholder:text-[#aaa]" />
            </div>
            <button type="button" aria-label="Cancella" className="flex h-[62px] w-14 items-center justify-center rounded-lg bg-[#11c1f3]">
              <svg viewBox="0 0 32 22" className="h-[22px] w-8" fill="none" stroke="white" aria-hidden="true">
                <path d="M9 1h20.500q1.500 0 1.500 1.500v17q0 1.500-1.500 1.500H9Q5.500 18 1 11 5.500 4 9 1z" strokeWidth="2" strokeLinejoin="round" />
                <path d="M13.500 5.500l11 11M24.500 5.500l-11 11" strokeWidth="3" strokeLinecap="round" />
              </svg>
            </button>
          </div>
          <div className="px-5 pt-8">
            <p className="text-[24px] leading-9 text-black">Selezionare un punto all'interno dell'area indicata</p>
            <p className="mt-[25px] text-[27px] leading-9 text-black">Tocca un punto nel rettangolo per attivare la mappa</p>
            <div className="relative mt-[21px] h-[800px] overflow-hidden">
              <MapDrawing />
              <div className="absolute right-0 bottom-0 bg-white/70 px-2.5 font-['Liberation_Sans',sans-serif] text-[23px] leading-8 text-[#333]">
                <a href="#leaflet" className="text-[#0078a8]">Leaflet</a> | © <a href="#osm" className="text-[#0078a8]">OpenStreetMap</a> contributors
              </div>
            </div>
          </div>
        </div>
      </div>
    </div>
  );
}
